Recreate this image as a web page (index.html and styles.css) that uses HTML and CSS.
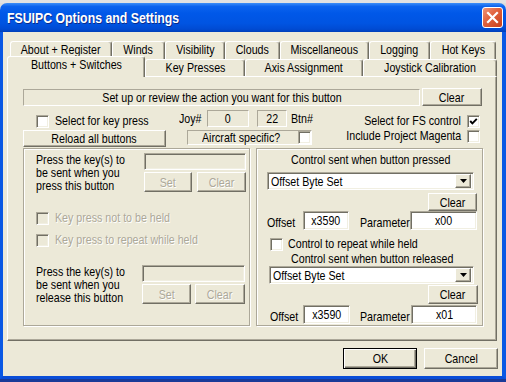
FILE: index.html
```html
<!DOCTYPE html>
<html lang="en">
<head>
  <meta charset="UTF-8" />
  <title>FSUIPC Options and Settings</title>
  <link rel="stylesheet" href="styles.css">
</head>
<body>
  <div class="desktop-strip"></div>
  <div class="titlebar">
    <span class="title"><span class="nx">FSUIPC Options and Settings</span></span>
    <button class="close-btn" aria-label="Close">
      <svg width="13" height="13" viewBox="0 0 13 13"><path d="M2 2 L11 11 M11 2 L2 11" stroke="#fff" stroke-width="2.2" stroke-linecap="square"/></svg>
    </button>
  </div>
  <div class="frame">
    <div class="client">
      <div class="tab-row back">
        <div class="tab w-about"><span class="nx mid">About + Register</span></div>
        <div class="tab w-winds"><span class="nx mid">Winds</span></div>
        <div class="tab w-vis"><span class="nx mid">Visibility</span></div>
        <div class="tab w-clouds"><span class="nx mid">Clouds</span></div>
        <div class="tab w-misc"><span class="nx mid">Miscellaneous</span></div>
        <div class="tab w-log"><span class="nx mid">Logging</span></div>
        <div class="tab w-hot"><span class="nx mid">Hot Keys</span></div>
      </div>
      <div class="tab-row front">
        <div class="tab active w-buttons"><span class="nx mid">Buttons + Switches</span></div>
        <div class="tab w-keys"><span class="nx mid">Key Presses</span></div>
        <div class="tab w-axis"><span class="nx mid">Axis Assignment</span></div>
        <div class="tab w-joy"><span class="nx mid">Joystick Calibration</span></div>
      </div>

      <div class="panel">
        <div class="row row-a">
          <div class="status"><span class="nx mid">Set up or review the action you want for this button</span></div>
          <button class="btn top-clear"><span class="nx mid">Clear</span></button>
        </div>

        <div class="row row-b">
          <label class="checkline key-select"><span class="check"></span><span class="nx">Select for key press</span></label>
          <span class="joy-label"><span class="nx">Joy#</span></span>
          <span class="readout joy-num"><span class="nx mid">0</span></span>
          <span class="readout btn-num"><span class="nx mid">22</span></span>
          <span class="btn-label"><span class="nx">Btn#</span></span>
          <label class="checkline right-check"><span class="nx end">Select for FS control</span><span class="check"><svg width="9" height="9" viewBox="0 0 9 9"><path d="M1.2 4 L3.4 6.4 L7.8 1.8" fill="none" stroke="#000" stroke-width="1.9"/></svg></span></label>
        </div>

        <div class="row row-c">
          <button class="btn reload"><span class="nx mid">Reload all buttons</span></button>
          <div class="aircraft"><span class="nx">Aircraft specific?</span><span class="check"></span></div>
          <label class="checkline right-check magenta"><span class="nx end">Include Project Magenta</span><span class="check"></span></label>
        </div>

        <div class="groups">
          <div class="group keys">
            <div class="key-block">
              <div class="key-text"><span class="nx">Press the key(s) to<br>be sent when you<br>press this button</span></div>
              <div class="key-input">
                <div class="edit off"></div>
                <div class="key-btns">
                  <button class="btn" disabled><span class="nx mid">Set</span></button>
                  <button class="btn" disabled><span class="nx mid">Clear</span></button>
                </div>
              </div>
            </div>
            <label class="checkline dim held"><span class="check off"></span><span class="nx">Key press not to be held</span></label>
            <label class="checkline dim repeat"><span class="check off"></span><span class="nx">Key press to repeat while held</span></label>
            <div class="key-block release">
              <div class="key-text"><span class="nx">Press the key(s) to<br>be sent when you<br>release this button</span></div>
              <div class="key-input">
                <div class="edit off"></div>
                <div class="key-btns">
                  <button class="btn" disabled><span class="nx mid">Set</span></button>
                  <button class="btn" disabled><span class="nx mid">Clear</span></button>
                </div>
              </div>
            </div>
          </div>

          <div class="group control">
            <div class="ctl-title"><span class="nx">Control sent when button pressed</span></div>
            <div class="select sel-press"><span class="nx">Offset Byte Set</span><span class="arrow"><svg width="7" height="4" viewBox="0 0 7 4"><path d="M0 0 H7 L3.5 4 Z" fill="#000"/></svg></span></div>
            <button class="btn ctl-clear"><span class="nx mid">Clear</span></button>
            <div class="offset-row">
              <span class="off-label"><span class="nx">Offset</span></span><span class="edit val off-val"><span class="nx mid">x3590</span></span>
              <span class="par-label"><span class="nx">Parameter</span></span><span class="edit val par-val"><span class="nx mid">x00</span></span>
            </div>
            <label class="checkline repeat-ctl"><span class="check"></span><span class="nx">Control to repeat while held</span></label>
            <div class="ctl-title second"><span class="nx">Control sent when button released</span></div>
            <div class="select sel-release"><span class="nx">Offset Byte Set</span><span class="arrow"><svg width="7" height="4" viewBox="0 0 7 4"><path d="M0 0 H7 L3.5 4 Z" fill="#000"/></svg></span></div>
            <button class="btn ctl-clear second"><span class="nx mid">Clear</span></button>
            <div class="offset-row second">
              <span class="off-label"><span class="nx">Offset</span></span><span class="edit val off-val"><span class="nx mid">x3590</span></span>
              <span class="par-label"><span class="nx">Parameter</span></span><span class="edit val par-val"><span class="nx mid">x01</span></span>
            </div>
          </div>
        </div>
      </div>

      <div class="dialog-buttons">
        <button class="btn default"><span class="nx mid">OK</span></button>
        <button class="btn"><span class="nx mid">Cancel</span></button>
      </div>
    </div>
  </div>
  <div class="taskbar"></div>
</body>
</html>
```

FILE: styles.css
```css
* {
  box-sizing: border-box;
}

body {
  margin: 0;
  width: 506px;
  height: 382px;
  overflow: hidden;
  background: #dcdcdc;
  font-family: "Liberation Sans", Arial, sans-serif;
  font-size: 13px;
  color: #000;
}

/* narrow face: the dialog font is condensed, so squeeze the text runs */
.nx {
  display: inline-block;
  white-space: nowrap;
  transform: scaleX(0.82);
  transform-origin: 0 50%;
}

.nx.mid {
  transform-origin: 50% 50%;
}

.nx.end {
  transform-origin: 100% 50%;
}

.desktop-strip {
  height: 3px;
  background: #e2e2e2;
}

/* title bar */
.titlebar {
  height: 29px;
  display: flex;
  align-items: center;
  justify-content: space-between;
  padding: 0 3px 0 7px;
  border-radius: 7px 7px 0 0;
  background: linear-gradient(#3d8ef8 0%, #0c63ee 12%, #0058e8 35%, #0054e2 70%, #004bd3 90%, #003fb8 100%);
}

.title {
  color: #fff;
  font-weight: bold;
  font-size: 15px;
  text-shadow: 1px 1px #0a2a8a;
}

.close-btn {
  width: 21px;
  height: 21px;
  padding: 0;
  border: 1px solid #fff;
  border-radius: 3px;
  background: linear-gradient(135deg, #f09478, #e0603c 45%, #c8401c);
  display: flex;
  align-items: center;
  justify-content: center;
}

.frame {
  border-left: 3px solid #0a58e4;
  border-right: 4px solid #0a58e4;
  border-bottom: 3px solid #0a4ed8;
}

.client {
  height: 344px;
  padding-top: 9px;
  background: #ece9d8;
}

.taskbar {
  height: 3px;
  background: #1a3a98;
}

/* tabs */
.tab-row {
  display: flex;
  align-items: flex-end;
}

.tab-row.back {
  height: 18px;
  padding-left: 7px;
}

.tab-row.front {
  height: 17px;
  padding-left: 4px;
}

.tab {
  flex: none;
  height: 100%;
  text-align: center;
  line-height: 16px;
  background: #ece9d8;
  border-top: 1px solid #fff;
  border-left: 1px solid #fff;
  border-right: 1px solid #716f64;
  border-radius: 3px 3px 0 0;
  box-shadow: inset -1px 0 #aca899;
}

.tab.active {
  height: 21px;
  margin-bottom: -1px;
  position: relative;
  z-index: 2;
}

.w-about { width: 102px; }
.w-winds { width: 53px; }
.w-vis { width: 60px; }
.w-clouds { width: 55px; }
.w-misc { width: 89px; }
.w-log { width: 61px; }
.w-hot { width: 66px; }
.w-buttons { width: 138px; }
.w-keys { width: 100px; }
.w-axis { width: 118px; }
.w-joy { width: 134px; }

.panel {
  margin-left: 4px;
  width: 490px;
  height: 265px;
  padding: 11px 13px 0 15px;
  border: 1px solid;
  border-color: #fff #716f64 #716f64 #fff;
  box-shadow: inset -1px -1px #aca899;
}

/* common controls */
.btn {
  display: block;
  padding: 0;
  font: inherit;
  color: #000;
  text-align: center;
  background: #ece9d8;
  border: 1px solid;
  border-color: #fff #716f64 #716f64 #fff;
  box-shadow: inset -1px -1px #aca899;
}

.btn:disabled {
  color: #aca899;
  text-shadow: 1px 1px #fff;
}

.btn.default {
  border: 1px solid #000;
  box-shadow: inset 1px 1px #fff, inset -1px -1px #716f64, inset -2px -2px #aca899;
}

.status,
.readout,
.aircraft {
  border: 1px solid;
  border-color: #aca899 #fff #fff #aca899;
}

.edit,
.select {
  background: #fff;
  border: 1px solid;
  border-color: #aca899 #fff #fff #aca899;
  box-shadow: inset 1px 1px #716f64, inset -1px -1px #f1efe2;
}

.edit.off {
  background: #ece9d8;
}

.check {
  flex: none;
  width: 13px;
  height: 13px;
  display: flex;
  align-items: center;
  justify-content: center;
  background: #fff;
  border: 1px solid;
  border-color: #aca899 #fff #fff #aca899;
  box-shadow: inset 1px 1px #716f64, inset -1px -1px #f1efe2;
}

.check.off {
  background: #ece9d8;
}

.checkline {
  display: flex;
  align-items: center;
  gap: 6px;
  line-height: 14px;
}

.checkline.dim {
  color: #aca899;
  text-shadow: 1px 1px #fff;
}

.row {
  display: flex;
}

/* top rows */
.row-a {
  height: 18px;
}

.status {
  width: 397px;
  height: 17px;
  margin-top: 1px;
  text-align: center;
  line-height: 15px;
}

.top-clear {
  width: 60px;
  height: 18px;
  margin-left: 2px;
}

.row-b {
  height: 18px;
  margin-top: 4px;
  align-items: flex-end;
}

.key-select {
  flex: none;
  width: 143px;
  margin-left: 13px;
}

.joy-label,
.btn-label {
  flex: none;
  line-height: 17px;
  margin-bottom: 1px;
}

.joy-label {
  width: 28px;
}

.btn-label {
  margin-left: 4px;
}

.readout {
  flex: none;
  height: 17px;
  margin-bottom: 1px;
  text-align: center;
  line-height: 15px;
}

.joy-num {
  width: 42px;
}

.btn-num {
  width: 30px;
  margin-left: 8px;
}

.right-check {
  margin-left: auto;
  margin-right: 3px;
}

.row-c {
  height: 18px;
  margin-top: 1px;
}

.reload {
  flex: none;
  width: 143px;
  height: 17px;
  margin-top: 1px;
}

.aircraft {
  flex: none;
  width: 125px;
  height: 15px;
  margin: 1px 0 0 21px;
  padding-left: 14px;
  display: flex;
  align-items: center;
  line-height: 13px;
}

.aircraft .check {
  margin-left: auto;
}

.magenta {
  align-self: flex-start;
}

/* group boxes */
.groups {
  display: flex;
  gap: 6px;
  margin-top: 1px;
}

.group {
  width: 227px;
  height: 178px;
  border: 1px solid #aca899;
  box-shadow: inset 1px 1px #fff, 1px 1px #fff;
}

.key-block {
  display: flex;
  margin-top: 4px;
  padding-left: 12px;
}

.key-text {
  flex: none;
  width: 108px;
  line-height: 13px;
}

.key-input {
  flex: none;
  width: 102px;
}

.key-input .edit {
  height: 17px;
}

.key-btns {
  display: flex;
  gap: 5px;
  margin-top: 2px;
}

.key-btns .btn {
  width: 48px;
  height: 20px;
}

.key-btns .btn + .btn {
  width: 49px;
}

.held {
  margin: 19px 0 0 12px;
}

.repeat {
  margin: 8px 0 0 12px;
}

.key-block.release {
  margin-top: 18px;
}

.release .key-text {
  width: 106px;
}

.release .key-input {
  width: 103px;
}

.release .key-btns {
  gap: 4px;
}

.release .key-btns .btn {
  width: 49px;
}

.release .key-btns .btn + .btn {
  width: 50px;
}

.ctl-title {
  margin-top: 4px;
  padding-left: 34px;
  line-height: 14px;
}

.ctl-title.second {
  margin-top: 1px;
}

.select {
  display: flex;
  align-items: center;
  justify-content: space-between;
  height: 18px;
  padding: 0 2px 0 3px;
}

.select .arrow {
  width: 16px;
  height: 14px;
  display: flex;
  align-items: center;
  justify-content: center;
  background: #ece9d8;
  border: 1px solid;
  border-color: #fff #716f64 #716f64 #fff;
  box-shadow: inset -1px -1px #aca899;
}

.sel-press {
  width: 207px;
  margin: 5px 0 0 10px;
}

.sel-release {
  width: 205px;
  margin-left: 12px;
}

.ctl-clear {
  width: 49px;
  height: 18px;
  margin: 3px 0 0 171px;
}

.ctl-clear.second {
  width: 50px;
  height: 19px;
  margin-top: 1px;
}

.offset-row {
  display: flex;
  align-items: flex-end;
  height: 19px;
  margin-left: 10px;
}

.offset-row .off-label,
.offset-row .par-label {
  flex: none;
  line-height: 15px;
}

.off-label {
  width: 36px;
}

.par-label {
  width: 50px;
  margin-left: 11px;
}

.val {
  flex: none;
  height: 19px;
  text-align: center;
  line-height: 17px;
}

.off-val {
  width: 46px;
}

.par-val {
  width: 67px;
}

.offset-row.second {
  margin: 1px 0 0 13px;
}

.offset-row.second .off-label {
  width: 33px;
}

.offset-row.second .off-val {
  width: 47px;
}

.offset-row.second .par-label {
  width: 51px;
  margin-left: 10px;
}

.offset-row.second .par-val {
  width: 66px;
}

.repeat-ctl {
  margin: 7px 0 0 13px;
  gap: 5px;
}

/* dialog buttons */
.dialog-buttons {
  display: flex;
  justify-content: flex-end;
  gap: 7px;
  margin-top: 7px;
  padding-right: 4px;
}

.dialog-buttons .btn {
  width: 74px;
  height: 21px;
}
```
